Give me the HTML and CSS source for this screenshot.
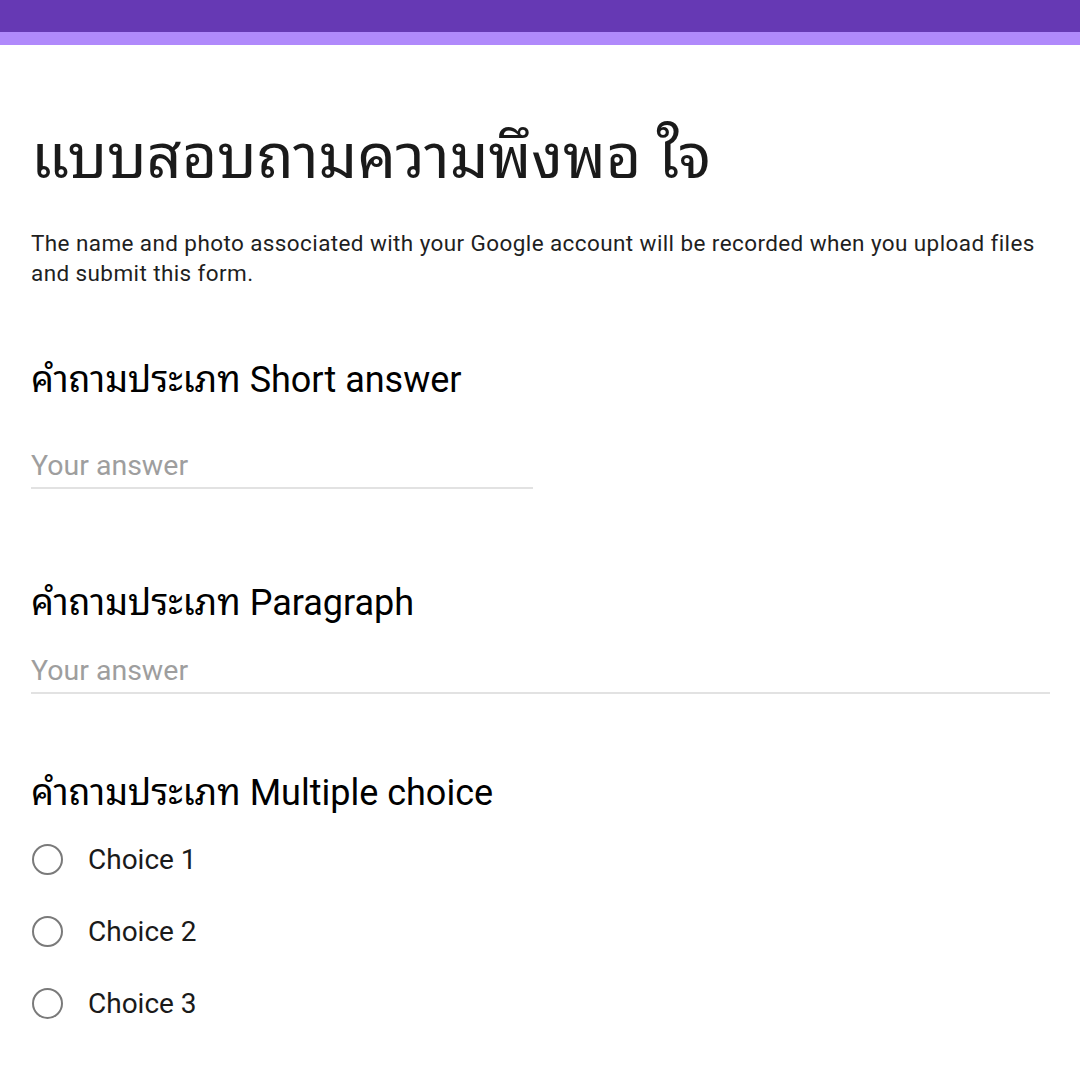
FILE: index.html
```html
<!DOCTYPE html>
<html lang="th">
<head>
<meta charset="utf-8">
<title>แบบสอบถามความพึงพอใจ</title>
<link rel="stylesheet" href="styles.css">
</head>
<body>
<div class="topbar"></div>
<div class="accent"></div>
<main class="content">
  <h1 class="title">แบบสอบถามความพึงพอ ใจ</h1>
  <p class="desc">The name and photo associated with your Google account will be recorded when you upload files and submit this form.</p>

  <section class="q q-first">
    <h2 class="q-title">คำถามประเภท Short answer</h2>
    <div class="answer answer-short">Your answer</div>
  </section>

  <section class="q q-second">
    <h2 class="q-title">คำถามประเภท Paragraph</h2>
    <div class="answer answer-long">Your answer</div>
  </section>

  <section class="q q-third">
    <h2 class="q-title">คำถามประเภท Multiple choice</h2>
    <ul class="choices">
      <li class="choice"><span class="radio"></span><span class="choice-label">Choice 1</span></li>
      <li class="choice"><span class="radio"></span><span class="choice-label">Choice 2</span></li>
      <li class="choice"><span class="radio"></span><span class="choice-label">Choice 3</span></li>
    </ul>
  </section>
</main>
</body>
</html>
```

FILE: styles.css
```css
html, body {
  margin: 0;
  padding: 0;
  background: #ffffff;
}
body {
  font-family: Roboto, "Noto Sans Thai Looped", "Noto Sans Thai", "Noto Sans", "DejaVu Sans", sans-serif;
  color: #202124;
  width: 1080px;
  height: 1080px;
  overflow: hidden;
}
.topbar {
  height: 32px;
  background: #6639b4;
}
.accent {
  height: 13px;
  background: #b089fb;
}
.content {
  padding: 0 28px 0 31px;
}
.title {
  margin: 72px 0 0;
  font-size: 61px;
  line-height: 80px;
  font-weight: 400;
  color: #1a1a1a;
}
.desc {
  margin: 31px 0 0;
  font-size: 22.5px;
  letter-spacing: 0.4px;
  line-height: 30px;
  color: #1f1f1f;
}
.q-title {
  margin: 0;
  font-size: 36px;
  line-height: 40px;
  font-weight: 400;
  color: #000;
}
.q-first { margin-top: 72px; }
.q-second { margin-top: 94px; }
.q-third { margin-top: 79px; }
.answer {
  margin-top: 50px;
  font-size: 28.5px;
  line-height: 32px;
  color: #9e9e9e;
  padding-bottom: 5px;
  border-bottom: 2px solid #e2e2e2;
}
.answer-short { width: 502px; }
.answer-long { margin-top: 32px; width: 1019px; padding-bottom: 5px; }
.choices {
  list-style: none;
  margin: 10px 0 0;
  padding: 0;
}
.choice {
  display: flex;
  align-items: center;
  height: 72px;
  gap: 25px;
}
.radio {
  width: 27px;
  height: 27px;
  border: 2px solid #7a7a7a;
  border-radius: 50%;
  flex: none;
  margin-left: 1px;
}
.choice-label {
  font-size: 28px;
  color: #1a1a1a;
}
```
